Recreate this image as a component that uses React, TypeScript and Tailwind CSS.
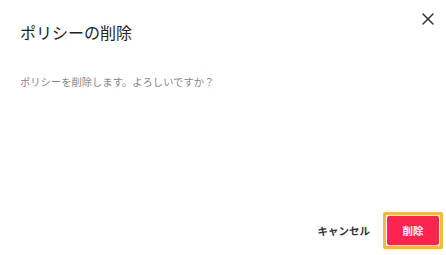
import { X } from "lucide-react";

export default function App() {
  return (
    <div
      className="relative flex h-[255px] w-[446px] flex-col bg-white"
      style={{ fontFamily: '"Noto Sans CJK JP", "Noto Sans", sans-serif' }}
    >
      <button className="absolute right-[8px] top-[9px] flex h-[20px] w-[20px] items-center justify-center text-[#333]">
        <X size={20} strokeWidth={1.8} />
      </button>

      <div className="px-5 pt-[20px]">
        <h2 className="text-[16px] leading-[24px] font-normal text-[#222]">ポリシーの削除</h2>
      </div>

      <div className="flex-1 px-5 pt-[30px]">
        <p className="text-[10.3px] leading-[16px] text-[#888]">
          ポリシーを削除します。よろしいですか？
        </p>
      </div>

      <div className="flex items-center justify-end gap-[13px] pb-[6px] pr-[3px]">
        <button className="text-[10.5px] font-bold text-[#333]">キャンセル</button>
        <div className="rounded-[2px] border-[3px] border-[#f5b83d] p-[1px]">
          <button className="flex h-[29px] w-[52px] items-center justify-center rounded-[2px] bg-[#ff2450] text-[10.5px] font-bold text-white">
            削除
          </button>
        </div>
      </div>
    </div>
  );
}
